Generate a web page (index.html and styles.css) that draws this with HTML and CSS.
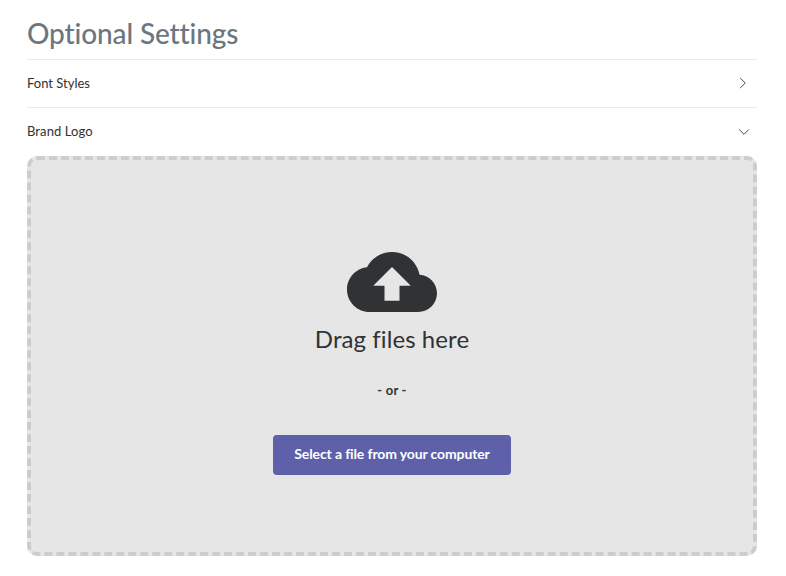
FILE: index.html
```html
<!DOCTYPE html>
<html lang="en">
<head>
<meta charset="utf-8">
<title>Optional Settings</title>
<link rel="stylesheet" href="styles.css">
</head>
<body>
<main class="settings">
  <h1 class="title">Optional Settings</h1>
  <div class="row">
    <span class="label">Font Styles</span>
    <svg class="chevron" width="16" height="16" viewBox="0 0 16 16"><path d="M5.2 3 L10.3 8 L5.2 13"/></svg>
  </div>
  <div class="row">
    <span class="label label-brand">Brand Logo</span>
    <svg class="chevron" width="16" height="16" viewBox="0 0 16 16"><path d="M4.2 6.5 L9 11.3 L13.8 6.5"/></svg>
  </div>
  <section class="dropzone">
    <svg class="cloud" width="90" height="90" viewBox="0 0 24 24"><path d="M19.35 10.04C18.67 6.59 15.64 4 12 4 9.11 4 6.6 5.64 5.35 8.04 2.34 8.36 0 10.91 0 14c0 3.31 2.69 6 6 6h13c2.76 0 5-2.24 5-5 0-2.64-2.05-4.78-4.65-4.96zM14 13v4h-4v-4H7l5-5 5 5h-3z"/></svg>
    <p class="drag">Drag files here</p>
    <p class="or">- or -</p>
    <button class="select" type="button">Select a file from your computer</button>
  </section>
</main>
</body>
</html>
```
FILE: styles.css
```css
* {
  box-sizing: border-box;
}

body {
  margin: 0;
  background: #fff;
  color: #303233;
  font-family: Lato, "Liberation Sans", sans-serif;
  font-variant-ligatures: none;
}

.settings {
  width: 730px;
  margin-left: 27px;
  padding-top: 8px;
}

.title {
  height: 51px;
  margin: 0;
  color: #6b7680;
  font-size: 28px;
  font-weight: 500;
  letter-spacing: -0.13px;
  line-height: 50px;
}

.row {
  display: flex;
  align-items: center;
  justify-content: space-between;
  height: 48px;
  padding: 0 6px 1px 0;
  border-top: 1px solid #e9e9ef;
}

.label {
  font-size: 13px;
  line-height: 20px;
}

.label-brand {
  letter-spacing: 0.1px;
}

.chevron {
  fill: none;
  stroke: #4a4c4e;
  stroke-width: 1;
}

.dropzone {
  display: flex;
  flex-direction: column;
  align-items: center;
  height: 400px;
  margin-top: 1px;
  padding-top: 77px;
  border: 4px dashed #cdcdcd;
  border-radius: 10px;
  background: #e6e6e6;
}

.cloud {
  display: block;
  fill: #303233;
}

.drag {
  margin: -5px 0 0;
  font-size: 24px;
  letter-spacing: 0.08px;
  line-height: 34px;
}

.or {
  margin: 24px 0 0;
  font-size: 13px;
  font-weight: 700;
  letter-spacing: 0.2px;
  line-height: 20px;
}

.select {
  width: 238px;
  height: 40px;
  margin-top: 35px;
  padding: 0 0 2px;
  border: 0;
  border-radius: 4px;
  background: #5e61a9;
  color: #fff;
  font: 700 14px/38px Lato, "Liberation Sans", sans-serif;
  font-variant-ligatures: none;
  letter-spacing: -0.12px;
}
```
